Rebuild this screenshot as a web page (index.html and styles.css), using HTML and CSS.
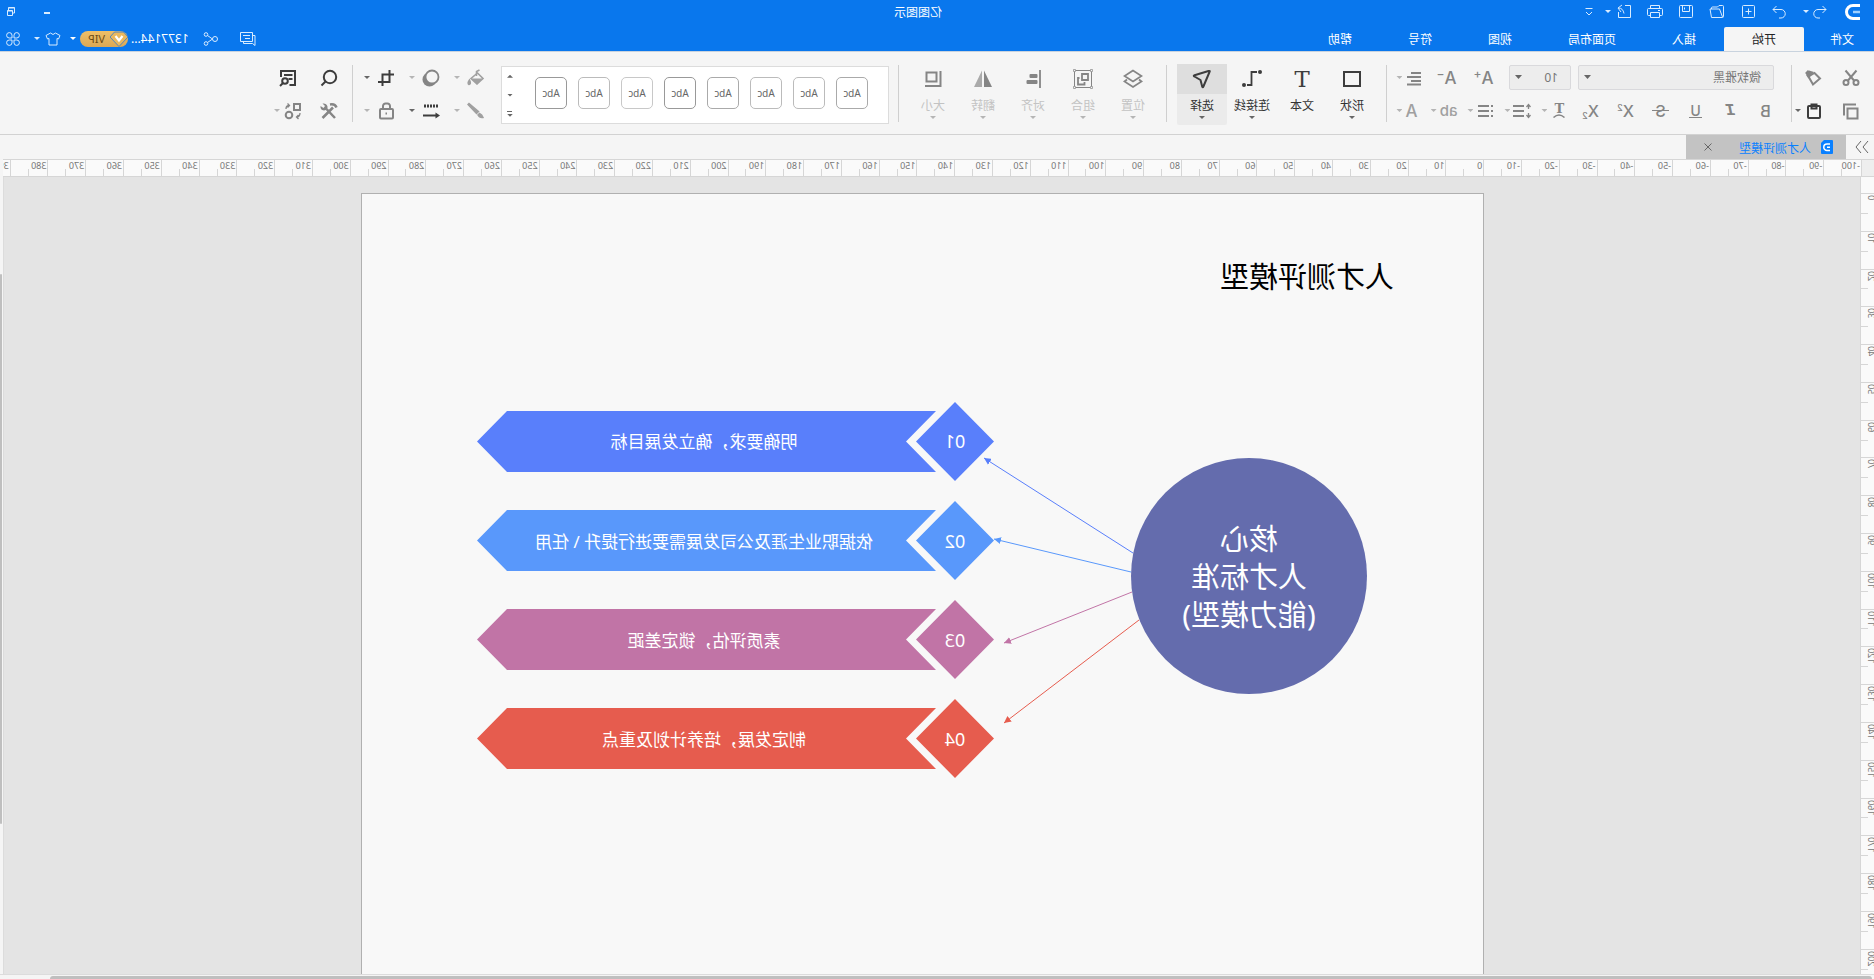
FILE: index.html
```html
<!DOCTYPE html>
<html lang="zh-CN">
<head>
<meta charset="utf-8">
<title>亿图图示</title>
<link rel="stylesheet" href="styles.css">
</head>
<body>
<div class="app">
  <header class="header">
    <div class="titlebar">
      <div class="quick">
        <svg class="logo" viewBox="0 0 16 16"><path d="M1 1.500H8a6.500 6.500 0 0 1 0 13H1" fill="none" stroke="#fff" stroke-width="3"/><path d="M1 8H8" stroke="#9fd0ff" stroke-width="2.500"/></svg>
        <span class="pair undo"><button class="ib" aria-label="撤销"><svg class="i16" viewBox="0 0 16 16"><path d="M5.500 2 2 5.500 5.500 9M2 5.500h8a4 4 0 0 1 0 8.500H8"/></svg></button><i class="caret"></i></span>
        <button class="ib" aria-label="重做"><svg class="i16" viewBox="0 0 16 16"><path d="M10.500 2 14 5.500 10.500 9M14 5.500H6a4 4 0 0 0 0 8.500h2"/></svg></button>
        <button class="ib" aria-label="新建"><svg class="i16" viewBox="0 0 16 16"><rect x="1.500" y="1.500" width="12" height="12" rx="1"/><path d="M7.500 4.500v6M4.500 7.500h6"/></svg></button>
        <button class="ib" aria-label="打开"><svg class="i16" viewBox="0 0 16 16"><path d="M13.500 5V4a1 1 0 0 0-1-1H7.500L6 1.500H2.500a1 1 0 0 0-1 1v10a1 1 0 0 0 1 1h11l1.500-8.500H5.500L2.500 13"/></svg></button>
        <button class="ib" aria-label="保存"><svg class="i16" viewBox="0 0 16 16"><path d="M2.500 1.500h11a1 1 0 0 1 1 1v10a1 1 0 0 1-1 1h-11a1 1 0 0 1-1-1v-10a1 1 0 0 1 1-1zM4.500 1.500v6h7v-6M9.500 3.500v2"/></svg></button>
        <button class="ib" aria-label="打印"><svg class="i16" viewBox="0 0 16 16"><path d="M3.500 4.500v-3h9v3M3.500 11.500h-2a1 1 0 0 1-1-1v-5a1 1 0 0 1 1-1h13a1 1 0 0 1 1 1v5a1 1 0 0 1-1 1h-2M3.500 8.500h9v5h-9zM3 6.500h2"/></svg></button>
        <span class="tail">
          <span class="pair"><button class="ib" aria-label="导出"><svg class="i16" viewBox="0 0 16 16"><path d="M7 1.500H1.500v12h12V8M10 1l4 3-3 4M13.500 4Q9 4 8 9.500"/></svg></button><i class="caret"></i></span>
          <button class="ib" aria-label="更多"><svg class="i16" viewBox="0 0 16 16"><path d="M4.500 4.500h7M5 8l3 3 3-3"/></svg></button>
        </span>
      </div>
      <h1 class="apptitle">亿图图示</h1>
      <div class="winctl">
        <button class="ib" aria-label="最小化"><svg class="i16" viewBox="0 0 16 16"><path d="M5 9h6" stroke-width="2"/></svg></button>
        <button class="ib" aria-label="还原"><svg class="i16" viewBox="0 0 16 16"><path d="M6.500 9H4.500V3.500h6v3M4.500 4h6M6.500 6.500h5v5h-5zM6.500 7h5"/></svg></button>
      </div>
    </div>
    <div class="menubar">
      <nav class="tabs">
        <button class="tab file">文件</button><button class="tab on">开始</button><button class="tab">插入</button><button class="tab">页面布局</button><button class="tab">视图</button><button class="tab">符号</button><button class="tab">帮助</button>
      </nav>
      <div class="account">
        <button class="ib" aria-label="消息"><svg class="i16" viewBox="0 0 16 16"><path d="M3.500 1.500h12v9h-12zM3.500 4.500H1v10l2.500-2h9v-2M6 4.500h7M6 7.500h5"/></svg></button>
        <button class="ib share" aria-label="分享"><svg class="i16" viewBox="0 0 16 16"><circle cx="4" cy="8" r="2.500"/><circle cx="13" cy="3.500" r="1.800"/><circle cx="13" cy="12.500" r="1.800"/><path d="M6.500 8 11.500 4.500M6.500 8l5 3.500"/></svg></button>
        <button class="user"><span>1377144...</span><span class="vip"><svg class="gem" viewBox="0 0 18 16"><path d="M4.500 1h9L18 6l-9 9.500L0 6z" fill="#e9b85f" stroke="#2f7ad0" stroke-width="0.800"/><path d="m5.500 5 3.500 4.500L12.500 5" fill="none" stroke="#fff" stroke-width="2.200"/></svg>VIP</span><i class="caret"></i></button>
        <span class="pair skin"><button class="ib" aria-label="皮肤"><svg class="i16" viewBox="0 0 16 16"><path d="M5.500 2 1 4.500 2.500 8l1.500-.5V14h8V7.500l1.500.5L15 4.500 10.500 2Q8 5 5.500 2z"/></svg></button><i class="caret"></i></span>
        <button class="ib apps" aria-label="应用"><svg class="i16" viewBox="0 0 16 16"><path d="M7 7H4.200A2.700 2.700 0 1 1 7 4.200zM9 7V4.200A2.700 2.700 0 1 1 11.800 7zM7 9v2.800A2.700 2.700 0 1 1 4.200 9zM9 9h2.800A2.700 2.700 0 1 1 9 11.800z"/></svg></button>
      </div>
    </div>
  </header>

  <section class="ribbon">
    <div class="group clip">
      <button class="tb" aria-label="剪切"><svg class="i18 s2" viewBox="0 0 18 18"><path d="m3.500 1.500 8.500 10M14.500 1.500 6 11.500"/><circle cx="4" cy="13.500" r="2.500"/><circle cx="14" cy="13.500" r="2.500"/></svg></button>
      <button class="tb" aria-label="格式刷"><svg class="i18 s2" viewBox="0 0 18 18"><path d="M14.500 7.500 8.500 4 3 9.500l7 6z"/><path d="m9 3 5-1.500L17 6l-2.500 3.500z" fill="currentColor" stroke="none"/><path d="m14.500 4.500 2-2" stroke-width="4"/></svg></button>
      <button class="tb" aria-label="复制"><svg class="i18 s2" viewBox="0 0 18 18"><path d="M2.500 5.500h10v10h-10z" transform="translate(0 1)"/><path d="M4 2.500h12v11" /></svg></button>
      <button class="tb dark" aria-label="粘贴"><svg class="i18 s2" viewBox="0 0 18 18"><rect x="3" y="4" width="12" height="12" rx="1"/><path d="M6.500 2.500h5v4h-5z"/></svg><i class="caret"></i></button>
    </div>
    <div class="sep"></div>
    <div class="group fonts">
      <div class="row first">
        <label class="sel family"><select aria-label="字体"><option>微软雅黑</option></select></label>
        <label class="sel size"><select aria-label="字号"><option>10</option></select></label>
        <div class="cells">
          <button class="tb c37" aria-label="增大字号"><span class="letter tall">A<sup>+</sup></span></button><button class="tb c37" aria-label="减小字号"><span class="letter tall">A<sup>−</sup></span></button><button class="tb drop" aria-label="对齐方式"><svg class="i18 s2" viewBox="0 0 18 18"><path d="M2 4h10M2 8h14M2 12h10M2 15.500h14"/></svg><i class="caret"></i></button>
        </div>
      </div>
      <div class="row">
        <button class="tb c35"><span class="letter">B</span></button><button class="tb c35"><span class="letter ital">I</span></button><button class="tb c35"><span class="letter under">U</span></button><button class="tb c35"><span class="letter strike">S</span></button><button class="tb c35"><span class="letter">X<sup>2</sup></span></button><button class="tb c35"><span class="letter">X<sub>2</sub></span></button>
        <button class="tb drop" aria-label="文字方向"><span class="tarc"><b>T</b><svg class="arc" viewBox="0 0 12 4"><path d="M.5 3.500Q6-1.500 11.500 3.500"/></svg></span><i class="caret"></i></button>
        <button class="tb drop" aria-label="行距"><svg class="i18 s2" viewBox="0 0 18 18"><path d="M7 4h11M7 9h11M7 14h11"/><path d="M2.500 3v4M2.500 11v4M.5 5l2-2.500 2 2.500M.5 13l2 2.500 2-2.500" stroke-width="1.300"/></svg><i class="caret"></i></button>
        <button class="tb drop" aria-label="项目符号"><svg class="i18 s2" viewBox="0 0 18 18"><path d="M5 4h11M5 9h11M5 14h11M1 4h2M1 9h2M1 14h2"/></svg><i class="caret"></i></button>
        <button class="tb drop pale"><span class="letter ab">ab</span><i class="caret"></i></button>
        <button class="tb drop pale"><span class="letter tall">A</span><i class="caret"></i></button>
      </div>
    </div>
    <div class="sep"></div>
    <div class="group tools">
      <button class="big"><span class="pic"><svg class="i20 s2" viewBox="0 0 20 20"><rect x="2" y="3" width="16" height="14"/></svg></span><span>形状</span><i class="caret"></i></button>
      <button class="big"><span class="pic"><b class="tee">T</b></span><span>文本</span></button>
      <button class="big"><span class="pic"><svg class="i20" viewBox="0 0 20 20"><path d="M5 3h5.500v13H15" stroke-width="1.800"/><circle cx="2" cy="3" r="2" fill="currentColor" stroke="none"/><circle cx="18" cy="16" r="2" fill="currentColor" stroke="none"/></svg></span><span>连接线</span><i class="caret"></i></button>
      <button class="big chosen"><span class="pic"><svg class="i20 s2" viewBox="0 0 20 20"><path d="M2.500 3Q1.500 1.500 3.500 2l14 4.200q1.500.6 0 1.300L11.500 11 9.800 17.500q-.6 1.300-1.200 0z" stroke-linejoin="round"/></svg></span><span>选择</span><i class="caret"></i></button>
    </div>
    <div class="sep"></div>
    <div class="group tools off">
      <button class="big"><span class="pic"><svg class="i20" viewBox="0 0 20 20"><path d="m10 1.500 8.500 5.500-8.500 5.500L1.500 7zM4 10.500 1.500 12.500l8.500 5.500 8.500-5.500-2.500-2" stroke-width="1.800"/></svg></span><span>位置</span><i class="caret"></i></button>
      <button class="big"><span class="pic"><svg class="i20" viewBox="0 0 20 20"><path d="M2 1.500h16M2 18.500h16M1.500 2v16M18.500 2v16" stroke-width="1"/><g fill="#f5f5f5" stroke-width="1"><circle cx="1.500" cy="1.500" r="1.200"/><circle cx="18.500" cy="1.500" r="1.200"/><circle cx="1.500" cy="18.500" r="1.200"/><circle cx="18.500" cy="18.500" r="1.200"/></g><path d="M5 5h6v6H5zM13.500 9h1.500v6.500H8.500V13" stroke-width="1.800"/></svg></span><span>组合</span><i class="caret"></i></button>
      <button class="big"><span class="pic"><svg class="i20" viewBox="0 0 20 20"><path d="M3 1v18" stroke-width="1.800"/><rect x="5.500" y="5" width="8" height="4" rx="1" fill="currentColor" stroke="none"/><rect x="5.500" y="11" width="11" height="4" rx="1" fill="currentColor" stroke="none"/></svg></span><span>对齐</span><i class="caret"></i></button>
      <button class="big"><span class="pic"><svg class="i20" viewBox="0 0 20 20"><path d="M9 1.500V18H1z" fill="currentColor" stroke="none"/><path d="M11 1.500V18h8z" fill="#aaa" stroke="none"/></svg></span><span>翻转</span><i class="caret"></i></button>
      <button class="big"><span class="pic"><svg class="i20 s2" viewBox="0 0 20 20"><path d="M6.500 3.500h10v9h-10zM2.500 2v15H18"/></svg></span><span>大小</span><i class="caret"></i></button>
    </div>
    <div class="sep"></div>
    <div class="gallery">
      <div class="styles">
        <button class="style">Abc</button><button class="style light">Abc</button><button class="style light">Abc</button><button class="style">Abc</button><button class="style strong">Abc</button><button class="style pale">Abc</button><button class="style light">Abc</button><button class="style strong">Abc</button>
      </div>
      <div class="pager">
        <button aria-label="上"><i class="caret up"></i></button><button aria-label="下"><i class="caret"></i></button><button class="all" aria-label="全部"><i class="caret"></i></button>
      </div>
    </div>
    <div class="group shape">
      <button class="tb pale" aria-label="填充"><svg class="i18" viewBox="0 0 18 18"><path d="m7.500 4 6.500 5.500-6 5.500-6-5.500z" stroke-width="1.600"/><path d="M2.500 9.500h11.500L8 15.500z" fill="currentColor" stroke="none"/><path d="M8.500 7V2.500L5.500 1" stroke-width="1.500"/><path d="M15.500 11q2.500 3.500.5 4.500-2.500-.5-.5-4.500z" fill="currentColor"/></svg><i class="caret"></i></button>
      <button class="tb" aria-label="阴影"><svg class="i18" viewBox="0 0 18 18"><circle cx="10.500" cy="10.500" r="7" fill="currentColor" stroke="none"/><circle cx="8" cy="8" r="6.500" fill="#f5f5f5" stroke-width="1.800"/></svg><i class="caret"></i></button>
      <button class="tb dark" aria-label="裁剪"><svg class="i18 s2" viewBox="0 0 18 18"><path d="M5.500 1v12H17M1 5.500h11.500V17"/></svg><i class="caret"></i></button>
      <button class="tb pale" aria-label="线条"><svg class="i18" viewBox="0 0 18 18"><path d="M16 1.500 17 2.500 8.500 11.500 6.500 9.500z" fill="currentColor"/><path d="M5.500 11.500 7 13q-1.500 3-5 2.500 1-3 3.500-4z" fill="currentColor"/></svg><i class="caret"></i></button>
      <button class="tb dark" aria-label="线型"><svg class="i18 s2" viewBox="0 0 18 18"><path d="M2 4h15" stroke-width="3" stroke-dasharray="2 1"/><path d="M3 13.500h14"/><path d="M4.500 10.500v6L0 13.500z" fill="currentColor" stroke="none"/></svg><i class="caret"></i></button>
      <button class="tb" aria-label="锁定"><svg class="i18 s2" viewBox="0 0 18 18"><rect x="2" y="7" width="13" height="9.500" rx="1"/><path d="M5 7V4a2.500 2.500 0 0 1 2.500-2.500h2A2.500 2.500 0 0 1 12 4v3M8 11.500h1.500"/></svg><i class="caret"></i></button>
    </div>
    <div class="sep"></div>
    <div class="group edit">
      <button class="tb dark" aria-label="查找"><svg class="i18 s2" viewBox="0 0 18 18"><circle cx="8" cy="8" r="6.200"/><path d="m12.500 12.500 4 4"/></svg></button>
      <button class="tb dark replace" aria-label="替换"><svg class="i18 s2" viewBox="0 0 18 18"><path d="M7.500 16H2V2h14v6M4.500 6H13M4.500 10h4" /><circle cx="12" cy="12" r="2.800"/><path d="m14 14 3 3"/></svg></button>
      <button class="tb" aria-label="工具"><svg class="i18 s2" viewBox="0 0 18 18"><path d="M5 5.500 15.500 16M11.500 7 3 16M1.500 5.500Q3 1.500 8 2.500" stroke-width="2.500"/><path d="M15.500 1.500 13 4l1.500 2 3-2q.5 4-3.500 4.500-4-.5-3.500-4 1-3.500 5-3z" fill="currentColor" stroke="none"/></svg></button>
      <button class="tb" aria-label="转换"><svg class="i18 s2" viewBox="0 0 18 18"><path d="M2 2h6v6H2z"/><circle cx="13" cy="13" r="3.300"/><path d="M16 7Q16 3.500 12.500 3.500M14.500 1.500l-2 2 2 2M2 11q0 3.500 3 4M3.500 17l2-2-2-2" stroke-width="1.300"/></svg><i class="caret"></i></button>
    </div>
  </section>

  <div class="docs">
    <button class="collapse" aria-label="收起"><svg class="i16" viewBox="0 0 16 16"><path d="m2 2 5 6-5 6M9 2l5 6-5 6"/></svg></button>
    <div class="doc">
      <svg class="docicon" viewBox="0 0 12 14"><path d="M1 0h8l3 3v10a1 1 0 0 1-1 1H1a1 1 0 0 1-1-1V1a1 1 0 0 1 1-1z" fill="#0a80ff"/><path d="M3 4h3a3 3 0 0 1 0 6.500H3M3 7.200h3" fill="none" stroke="#fff" stroke-width="1.500"/></svg>
      <span class="docname">人才测评模型</span>
      <button class="close" aria-label="关闭"><svg viewBox="0 0 8 8"><path d="m.5.5 7 7M7.500.5l-7 7"/></svg></button>
    </div>
  </div>

  <div class="hruler"><div class="corner"></div><div class="hticks" id="hticks"></div></div>
  <main class="work">
    <div class="vruler" id="vticks"></div>
    <div class="canvas">
      <div class="page">
        <svg class="diagram" viewBox="0 0 1121 781" width="1121" height="781">
          <defs>
            <marker id="h1" markerWidth="8" markerHeight="8" refX="7" refY="3.500" orient="auto" markerUnits="userSpaceOnUse"><path d="M0 0 7 3.500 0 7z" fill="#597ffb"/></marker>
            <marker id="h2" markerWidth="8" markerHeight="8" refX="7" refY="3.500" orient="auto" markerUnits="userSpaceOnUse"><path d="M0 0 7 3.500 0 7z" fill="#5998fb"/></marker>
            <marker id="h3" markerWidth="8" markerHeight="8" refX="7" refY="3.500" orient="auto" markerUnits="userSpaceOnUse"><path d="M0 0 7 3.500 0 7z" fill="#c174a6"/></marker>
            <marker id="h4" markerWidth="8" markerHeight="8" refX="7" refY="3.500" orient="auto" markerUnits="userSpaceOnUse"><path d="M0 0 7 3.500 0 7z" fill="#e65c4e"/></marker>
          </defs>
          <text class="heading" x="176" y="94">人才测评模型</text>
          <circle cx="234" cy="382" r="118" fill="#646cad"/>
          <text class="core" x="234" y="356">核心</text>
          <text class="core" x="234" y="394">人才标准</text>
          <text class="core" x="234" y="432">(能力模型)</text>
          <path d="M350 359 499 264" stroke="#597ffb" marker-end="url(#h1)"/>
          <path d="M352 378 489 345" stroke="#5998fb" marker-end="url(#h2)"/>
          <path d="M351 398 479 449" stroke="#c174a6" marker-end="url(#h3)"/>
          <path d="M344 426 479 529" stroke="#e65c4e" marker-end="url(#h4)"/>
          <g fill="#597ffb"><path d="m528 208 39 39.500-39 39.500-39-39.500zM547 217h429l30 30.500-30 30.500H547l30-30.500z"/><text class="num" x="528" y="254">01</text><text class="step" x="779" y="254">明确要求，确立发展目标</text></g>
          <g fill="#5998fb"><path d="m528 307 39 39.500-39 39.500-39-39.500zM547 316h429l30 30.500-30 30.500H547l30-30.500z"/><text class="num" x="528" y="354">02</text><text class="step" x="779" y="354">依据职业生涯及公司发展需要进行提升 \ 任用</text></g>
          <g fill="#c174a6"><path d="m528 406 39 39.500-39 39.500-39-39.500zM547 415h429l30 30.500-30 30.500H547l30-30.500z"/><text class="num" x="528" y="453">03</text><text class="step" x="779" y="453">素质评估，锁定差距</text></g>
          <g fill="#e65c4e"><path d="m528 505 39 39.500-39 39.500-39-39.500zM547 514h429l30 30.500-30 30.500H547l30-30.500z"/><text class="num" x="528" y="552">04</text><text class="step" x="779" y="552">制定发展，培养计划及重点</text></g>
        </svg>
      </div>
    </div>
    <div class="vscroll"><div class="vthumb"></div></div>
  </main>
  <div class="hscroll"><div class="hthumb"></div></div>
</div>
<script src="script.js"></script>
</body>
</html>
```
FILE: styles.css
```css
* { box-sizing: border-box; }
body { margin: 0; font: 12px/16px "Noto Sans", "Noto Sans CJK SC", sans-serif; color: #333; background: #f5f5f5; }
button { font: inherit; color: inherit; background: none; border: 0; padding: 0; margin: 0; }
svg { display: block; }

/* the whole workspace is shown mirrored */
.app { height: 100vh; display: flex; flex-direction: column; overflow: hidden; transform: scaleX(-1); }

.i16, .i18, .i20 { fill: none; stroke: currentColor; stroke-width: 1; flex: none; }
.i16 { width: 16px; height: 16px; }
.i18 { width: 18px; height: 18px; stroke-width: 1.5; }
.i20 { width: 20px; height: 20px; }
.s2 { stroke-width: 2; }
.caret { flex: none; width: 6px; height: 3px; margin: 0 1px; background: currentColor; clip-path: polygon(0 0, 100% 0, 50% 100%); }
.caret.up { clip-path: polygon(50% 0, 100% 100%, 0 100%); }
.pair { display: flex; align-items: center; gap: 4px; }

.header { background: #0977ed; color: #d9ecff; border-bottom: 1px solid #c9d3de; }
.titlebar { display: grid; grid-template-columns: 1fr auto 1fr; align-items: center; height: 27px; }
.quick { display: flex; align-items: center; gap: 15px; padding: 0 0 4px 13px; }
.undo { padding-left: 2px; gap: 2px; }
.tail { display: flex; align-items: center; gap: 7px; }
.logo { width: 16px; height: 16px; }
.apptitle { margin: 0; padding: 0 0 2px 38px; font-size: 12px; font-weight: 400; color: #fff; }
.winctl { display: flex; justify-content: flex-end; gap: 20px; padding: 0 3px 4px 0; }

.menubar { display: flex; justify-content: space-between; height: 24px; }
.tabs { display: flex; }
.tab { padding: 2px 28px 0; color: #fff; }
.tab.file { padding: 2px 26px 0 20px; }
.tab.on { background: #f5f5f5; color: #222; border-radius: 2px 2px 0 0; }
.account { display: flex; align-items: center; padding: 0 5px 1px 0; }
.share { margin: 0 14px 0 21px; }
.user { display: flex; align-items: center; gap: 3px; color: #fff; }
.vip { display: flex; align-items: center; gap: 5px; width: 48px; height: 16px; border-radius: 8px; background: linear-gradient(#eebf68, #dba855); color: #6b4a14; font-size: 11px; }
.gem { width: 18px; height: 16px; }
.skin { margin: 0 12px 0 8px; }

.ribbon { display: flex; align-items: flex-start; height: 83px; padding-top: 12px; background: #f5f5f5; border-bottom: 1px solid #d2d2d2; flex: none; }
.sep { width: 1px; height: 57px; margin-top: 1px; background: #cfcfcf; flex: none; }
.group { flex: none; }
.tb { display: flex; align-items: center; justify-content: center; height: 25px; color: #858585; }
.tb .caret { background: #b5b5b5; }
.tb.dark { color: #3d3d3d; }
.tb.dark .caret { background: #666; }
.tb.pale { color: #a0a0a0; }

.clip { display: grid; grid-template-columns: 46px 36px; row-gap: 8px; padding-top: 1px; }
.clip .tb:nth-child(even) { justify-content: flex-start; padding-left: 5px; gap: 3px; }

.fonts { display: flex; flex-direction: column; gap: 8px; padding: 1px 0 0 8px; width: 404px; }
.row { display: flex; }
.row.first { gap: 7px; padding-left: 9px; }
.cells { display: flex; }
.sel { position: relative; display: block; color: #666; }
.sel::after { content: ""; position: absolute; right: 6px; top: 10px; width: 7px; height: 4px; background: #666; clip-path: polygon(0 0, 100% 0, 50% 100%); }
.sel select { appearance: none; width: 100%; height: 25px; padding: 0 12px; font: inherit; color: #777; background: #ededed; border: 1px solid #d9d9dc; border-radius: 2px; }
.family { width: 196px; }
.size { width: 62px; }
.c35 { width: 35px; }
.c37 { width: 37px; }
.drop { width: 37px; gap: 2px; }
.letter { position: relative; font: 500 16px/18px Inter, sans-serif; white-space: nowrap; }
.letter.tall { font-size: 17px; }
.letter sup, .letter sub { font-size: 9px; line-height: 0; }
.letter sup { vertical-align: 6px; }
.letter sub { vertical-align: -2px; }
.letter.tall sup { font-size: 12px; }
.letter.ital { font: italic bold 17px/18px "Liberation Mono", monospace; }
.letter.under { font-size: 14px; line-height: 13px; border-bottom: 1px solid currentColor; padding: 0 1px; }
.letter.strike::after { content: ""; position: absolute; left: -3px; right: -3px; top: 8px; border-top: 1px solid currentColor; }
.letter.ab { font-size: 15px; }
.tarc { display: flex; flex-direction: column; align-items: center; width: 18px; font: bold 13px/11px "DejaVu Serif", serif; }
.arc { width: 12px; height: 4px; fill: none; stroke: currentColor; stroke-width: 1.5; }

.tools { display: flex; padding: 0 10px 0 9px; color: #333; }
.tools.off { padding: 0 9px 0 8px; }
.big { display: flex; flex-direction: column; align-items: center; width: 50px; height: 61px; border-radius: 2px; }
.pic { display: flex; align-items: center; justify-content: center; width: 50px; height: 30px; margin-bottom: 4px; color: #3d3d3d; }
.big .caret { margin-top: 2px; background: #666; }
.off .big { color: #c3c3c3; }
.off .pic { color: #858585; }
.off .caret { background: #b5b5b5; }
.chosen { background: #ebebeb; }
.chosen .pic { background: #dedede; }
.tee { font: 23px/24px "DejaVu Serif", serif; }

.gallery { display: flex; width: 388px; height: 58px; margin: 2px 0 0 9px; background: #fff; border: 1px solid #dcdcdc; flex: none; }
.styles { display: flex; gap: 11px; padding: 10px 0 0 20px; flex: 1; }
.style { width: 32px; height: 32px; border: 1px solid #aaa; border-radius: 5px; font-size: 10px; color: #666; }
.style.light { border-color: #bbb; }
.style.pale { border-color: #c8c8c8; }
.style.strong { border-color: #999; }
.pager { display: flex; flex-direction: column; width: 16px; color: #666; }
.pager button { display: flex; flex-direction: column; align-items: center; justify-content: center; flex: 1; }
.all::before { content: ""; width: 5px; height: 1px; margin-bottom: 2px; background: currentColor; }

.shape { display: grid; grid-template-columns: 45px 45px 45px; row-gap: 8px; padding: 1px 0 0 16px; width: 148px; }
.shape .tb { justify-content: flex-start; gap: 6px; }
.edit { display: grid; grid-template-columns: 36px 36px; row-gap: 8px; padding: 1px 0 0 14px; }
.edit .tb { justify-content: flex-start; gap: 3px; }
.edit .replace { padding-left: 5px; }

.docs { display: flex; height: 24px; background: #f5f5f5; flex: none; }
.collapse { width: 28px; padding: 0 4px; color: #666; }
.doc { display: flex; align-items: center; width: 160px; padding: 0 18px 0 13px; background: #c3c3c3; }
.docicon { width: 12px; height: 14px; }
.docname { margin: 3px auto 0 10px; color: #0a80ff; }
.close svg { width: 8px; height: 8px; fill: none; stroke: #666; }

.hruler { display: flex; height: 18px; background: #fafafa; border: 1px solid #d6d6d6; border-width: 1px 0; margin-right: 3px; flex: none; font-size: 9px; line-height: 12px; color: #777; }
.corner { width: 12px; background: #eee; flex: none; }
.hticks { display: flex; flex: 1; overflow: hidden; }
.htick { width: 10mm; flex: none; padding-left: 1px; border-left: 1px solid #d6d6d6; background: linear-gradient(#d6d6d6, #d6d6d6) 5mm 100% / 1px 7px no-repeat; white-space: nowrap; }

.work { display: flex; flex: 1; min-height: 0; background: #e4e4e4; }
.vruler { width: 14px; padding-top: 16px; background: #fafafa; border-right: 1px solid #d6d6d6; flex: none; overflow: hidden; font-size: 9px; line-height: 10px; color: #777; }
.vtick { display: flex; height: 10mm; padding-top: 1px; border-top: 1px solid #d6d6d6; background: linear-gradient(#d6d6d6, #d6d6d6) 100% 5mm / 7px 1px no-repeat; }
.vtick span { writing-mode: vertical-rl; transform: rotate(180deg); margin-left: -2px; height: max-content; }
.canvas { flex: 1; overflow: hidden; padding: 16px 0 0 376px; min-width: 0; }
.page { width: 297mm; height: 210mm; background: #f8f8f8; border: 1px solid #b0b0b0; }
.vscroll { width: 4px; padding-top: 97px; background: #f5f5f5; border-left: 1px solid #dcdcdc; flex: none; }
.vthumb { width: 2px; height: 550px; margin-left: 1px; border-radius: 2px; background: #bfbfbf; }
.hscroll { height: 5px; padding: 1px 50px 0 2px; background: #f5f5f5; border-top: 1px solid #dcdcdc; flex: none; }
.hthumb { height: 3px; border-radius: 3px 3px 0 0; background: #bfbfbf; }

.diagram { fill: none; }
.diagram text { text-anchor: middle; }
.heading { font-size: 29px; fill: #000; }
.core { font-size: 29px; fill: #fff; }
.num { font-size: 18px; fill: #fff; }
.step { font-size: 17px; fill: #fff; }
```
FILE: script.js
```js
function fill(id, cls, from, to) {
  const host = document.getElementById(id);
  for (let n = from; n <= to; n += 10) {
    const cell = document.createElement('div');
    const label = document.createElement('span');
    cell.className = cls;
    label.textContent = n;
    cell.appendChild(label);
    host.appendChild(cell);
  }
}
fill('hticks', 'htick', -100, 390);
fill('vticks', 'vtick', 0, 200);
```
